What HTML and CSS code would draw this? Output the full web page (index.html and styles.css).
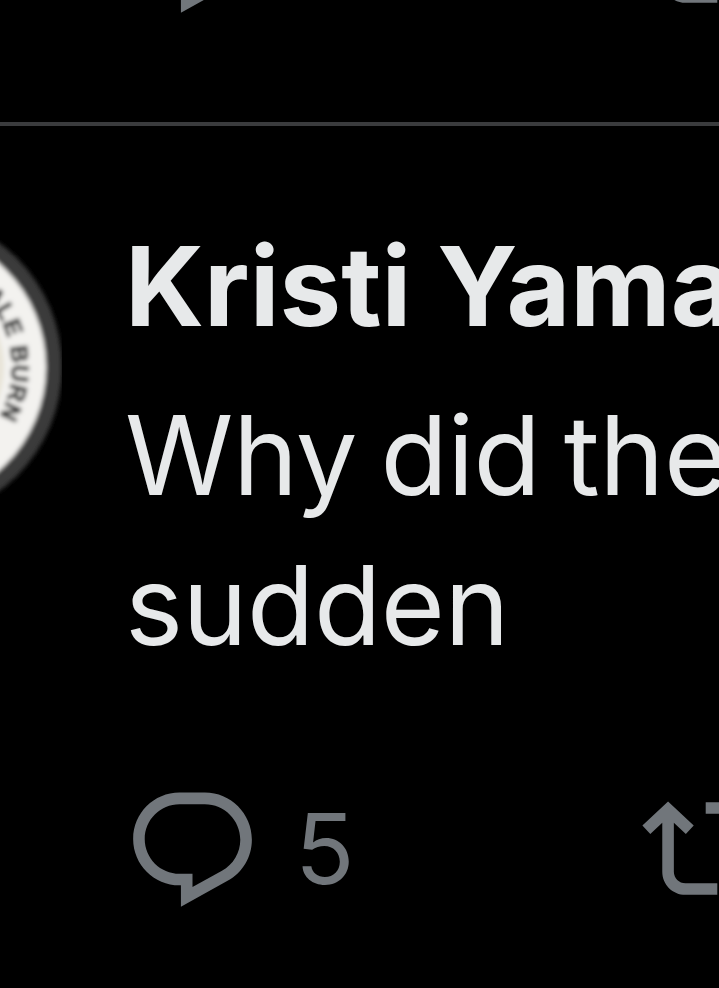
FILE: index.html
```html
<!DOCTYPE html>
<html lang="en">
<head>
<meta charset="utf-8">
<title>Post</title>
<link rel="stylesheet" href="styles.css">
</head>
<body>
<div class="page">
  <section class="prev-actions">
    <svg class="icon" viewBox="0 0 24 24"><path d="M1.751 10c0-4.42 3.584-8 8.005-8h4.366c4.49 0 8.129 3.64 8.129 8.13 0 2.96-1.607 5.68-4.196 7.11l-8.054 4.46v-3.69h-.067c-4.49.1-8.183-3.51-8.183-8.01zm8.005-6c-3.317 0-6.005 2.69-6.005 6 0 3.37 2.77 6.08 6.138 6.01l.351-.01h1.761v2.3l5.087-2.81c1.951-1.08 3.163-3.13 3.163-5.36 0-3.39-2.744-6.13-6.129-6.13H9.756z"/></svg>
    <svg class="icon" viewBox="0 0 24 24"><path d="M4.5 3.88l4.432 4.14-1.364 1.46L5.5 7.55V16c0 1.1.896 2 2 2H13v2H7.5c-2.209 0-4-1.79-4-4V7.55L1.432 9.48.068 8.02 4.5 3.88zM16.5 6H11V4h5.5c2.209 0 4 1.79 4 4v8.45l2.068-1.93 1.364 1.46-4.432 4.14-4.432-4.14 1.364-1.46 2.068 1.93V8c0-1.1-.896-2-2-2z"/></svg>
  </section>
  <hr class="divider">
  <article class="post">
    <svg class="avatar" viewBox="0 0 308 308">
      <defs>
        <filter id="soft"><feGaussianBlur stdDeviation="2.2"/></filter>
        <path id="seal-arc" d="M154 50A104 104 0 0 1 154 258"/>
      </defs>
      <g filter="url(#soft)">
        <circle cx="154" cy="154" r="154" fill="#3a3a3a"/>
        <circle cx="154" cy="154" r="138" fill="#f3f2ef"/>
        <circle cx="154" cy="154" r="96" fill="#e8e4d8"/>
        <text class="seal-text"><textPath href="#seal-arc" startOffset="20%">DALE BURN</textPath></text>
      </g>
    </svg>
    <div class="post-body">
      <div class="name">Kristi Yama</div>
      <p class="text">Why did the<br>sudden</p>
      <div class="actions">
        <div class="action">
          <svg class="icon" viewBox="0 0 24 24"><path d="M1.751 10c0-4.42 3.584-8 8.005-8h4.366c4.49 0 8.129 3.64 8.129 8.13 0 2.96-1.607 5.68-4.196 7.11l-8.054 4.46v-3.69h-.067c-4.49.1-8.183-3.51-8.183-8.01zm8.005-6c-3.317 0-6.005 2.69-6.005 6 0 3.37 2.77 6.08 6.138 6.01l.351-.01h1.761v2.3l5.087-2.81c1.951-1.08 3.163-3.13 3.163-5.36 0-3.39-2.744-6.13-6.129-6.13H9.756z"/></svg>
          <span class="count">5</span>
        </div>
        <svg class="icon" viewBox="0 0 24 24"><path d="M4.5 3.88l4.432 4.14-1.364 1.46L5.5 7.55V16c0 1.1.896 2 2 2H13v2H7.5c-2.209 0-4-1.79-4-4V7.55L1.432 9.48.068 8.02 4.5 3.88zM16.5 6H11V4h5.5c2.209 0 4 1.79 4 4v8.45l2.068-1.93 1.364 1.46-4.432 4.14-4.432-4.14 1.364-1.46 2.068 1.93V8c0-1.1-.896-2-2-2z"/></svg>
      </div>
    </div>
  </article>
</div>
</body>
</html>
```

FILE: styles.css
```css
* { box-sizing: border-box; }
html, body { margin: 0; padding: 0; background: #000; }
.page {
  width: 719px;
  height: 988px;
  overflow: hidden;
  background: #000;
  font-family: Inter, "Liberation Sans", sans-serif;
}
.icon {
  flex: none;
  display: block;
  width: 139px;
  height: 139px;
  fill: #71767b;
}
.prev-actions {
  height: 122px;
  display: flex;
  gap: 380px;
  padding-left: 123px;
  align-items: flex-end;
  overflow: hidden;
}
.prev-actions .icon { margin-bottom: 96px; }
.divider {
  margin: 0;
  border: 0;
  height: 4px;
  background: #3a3b3d;
}
.post {
  display: flex;
  align-items: flex-start;
  padding-top: 114px;
}
.avatar {
  flex: none;
  width: 308px;
  height: 308px;
  margin-top: -27px;
  margin-left: -246px;
  margin-right: 63px;
}
.seal-text {
  font-family: "Liberation Sans", sans-serif;
  font-weight: 700;
  font-size: 24px;
  letter-spacing: 1px;
  stroke: #2c2c2c;
  stroke-width: 1px;
  fill: #2c2c2c;
}
.post-body {
  flex: none;
  width: 700px;
  margin-top: -29px;
}
.name {
  font-size: 110px;
  font-weight: 700;
  line-height: 150px;
  margin-bottom: 19px;
  color: #e7e9ea;
  white-space: nowrap;
}
.text {
  margin: 0;
  font-size: 110px;
  font-weight: 380;
  line-height: 150px;
  letter-spacing: -0.5px;
  word-spacing: -7px;
  color: #e7e9ea;
  white-space: nowrap;
}
.actions {
  display: flex;
  margin-top: 99px;
  margin-left: -2px;
}
.action {
  width: 519px;
  display: flex;
  align-items: center;
  gap: 33px;
}
.count {
  font-size: 98px;
  font-weight: 380;
  line-height: 139px;
  margin-bottom: 3px;
  color: #71767b;
}
```
